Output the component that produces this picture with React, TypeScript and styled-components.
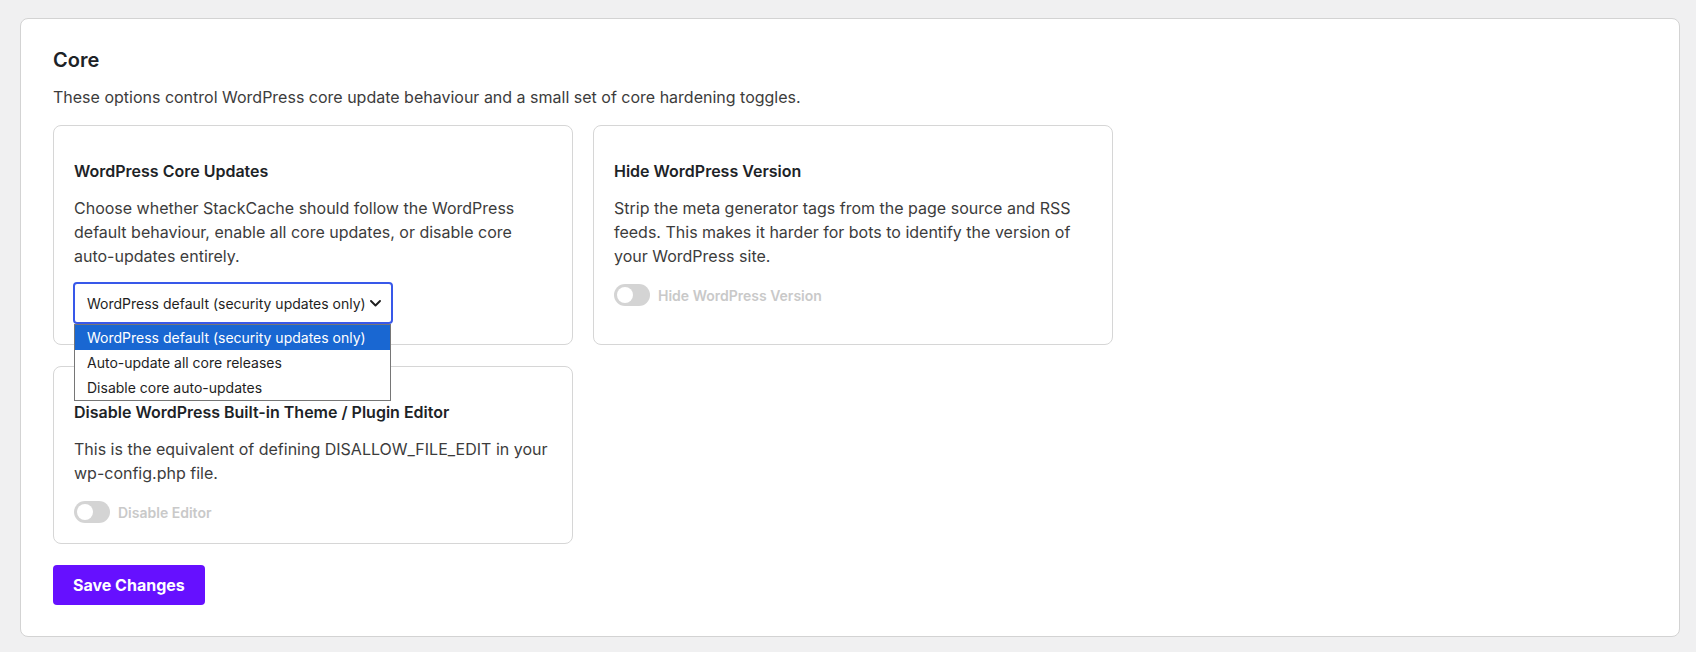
import React from "react";
import styled, { createGlobalStyle } from "styled-components";

const GlobalStyle = createGlobalStyle`
  html, body {
    margin: 0;
    padding: 0;
    background: #f0f0f1;
    font-family: Inter, "Noto Sans", "Liberation Sans", sans-serif;
    color: #1d2327;
  }
  * {
    box-sizing: border-box;
  }
`;

const Page = styled.div`
  padding: 18px 16px 15px 20px;
`;

const Panel = styled.section`
  background: #fff;
  border: 1px solid #d3d3d3;
  border-radius: 8px;
  padding: 28px 32px 31px;
`;

const Heading = styled.h2`
  margin: 0 0 12px;
  font-size: 20px;
  line-height: 26px;
  font-weight: 600;
  color: #1d2327;
`;

const Lead = styled.p`
  margin: 0 0 16px;
  font-size: 16px;
  line-height: 24px;
  color: #3c3c3c;
`;

const Grid = styled.div`
  display: grid;
  grid-template-columns: repeat(2, 520px);
  gap: 21px 20px;
  align-items: stretch;
`;

const Card = styled.div`
  background: #fff;
  border: 1px solid #d6d6d6;
  border-radius: 8px;
  padding: 32px 20px 20px;
`;

const CardTitle = styled.h3`
  margin: 0 0 12px;
  font-size: 16px;
  line-height: 26px;
  font-weight: 600;
  color: #1d2327;
`;

const CardText = styled.p`
  margin: 0;
  font-size: 16px;
  line-height: 24px;
  color: #3c3c3c;
`;

const SelectWrap = styled.div`
  position: relative;
  display: inline-block;
  margin-top: 14px;
  margin-left: -1px;
`;

const SelectBox = styled.div`
  display: inline-flex;
  align-items: center;
  gap: 4px;
  height: 42px;
  padding: 0 10px 0 12px;
  border: 2px solid #3858e9;
  border-radius: 4px;
  background: #fff;
  font-size: 14px;
  color: #1e1e1e;
  white-space: nowrap;

  svg {
    display: block;
    flex: none;
  }
`;

const OptionList = styled.ul`
  position: absolute;
  z-index: 10;
  top: 100%;
  left: 1px;
  right: 2px;
  margin: 0;
  padding: 0;
  list-style: none;
  background: #fff;
  border: 1px solid #767676;
`;

const Option = styled.li<{ $active?: boolean }>`
  height: 25px;
  display: flex;
  align-items: center;
  padding: 0 12px;
  font-size: 14px;
  white-space: nowrap;
  color: ${(p) => (p.$active ? "#fff" : "#1e1e1e")};
  background: ${(p) => (p.$active ? "#1967d2" : "transparent")};
`;

const ToggleRow = styled.label`
  display: flex;
  align-items: center;
  gap: 8px;
  margin-top: 16px;
  height: 22px;
`;

const Switch = styled.span<{ $on?: boolean }>`
  position: relative;
  width: 36px;
  height: 22px;
  border-radius: 11px;
  background: ${(p) => (p.$on ? "#6610ff" : "#d4d4d4")};
  flex: none;

  &::after {
    content: "";
    position: absolute;
    top: 3px;
    left: ${(p) => (p.$on ? "17px" : "3px")};
    width: 16px;
    height: 16px;
    border-radius: 50%;
    background: #fff;
  }
`;

const ToggleLabel = styled.span`
  font-size: 14px;
  font-weight: 600;
  color: #c9c9c9;
`;

const SaveButton = styled.button`
  margin-top: 21px;
  height: 40px;
  padding: 0 20px;
  border: 0;
  border-radius: 4px;
  background: #6610ff;
  color: #fff;
  font-family: inherit;
  font-size: 16px;
  font-weight: 700;
  cursor: pointer;
`;

const Chevron = () => (
  <svg width="11" height="7" viewBox="0 0 11 7" fill="none">
    <path d="M1 1l4.5 4.5L10 1" stroke="#1e1e1e" strokeWidth="1.9" strokeLinecap="round" strokeLinejoin="round" />
  </svg>
);

const updateModes = [
  "WordPress default (security updates only)",
  "Auto-update all core releases",
  "Disable core auto-updates",
];

const Toggle: React.FC<{ label: string }> = ({ label }) => (
  <ToggleRow>
    <Switch />
    <ToggleLabel>{label}</ToggleLabel>
  </ToggleRow>
);

const App: React.FC = () => {
  const selected = 0;

  return (
    <Page>
      <GlobalStyle />
      <Panel>
        <Heading>Core</Heading>
        <Lead>
          These options control WordPress core update behaviour and a small set of core hardening toggles.
        </Lead>

        <Grid>
          <Card>
            <CardTitle>WordPress Core Updates</CardTitle>
            <CardText>
              Choose whether StackCache should follow the WordPress default behaviour, enable all core updates, or
              disable core auto-updates entirely.
            </CardText>
            <SelectWrap>
              <SelectBox>
                {updateModes[selected]}
                <Chevron />
              </SelectBox>
              <OptionList>
                {updateModes.map((mode, i) => (
                  <Option key={mode} $active={i === selected}>
                    {mode}
                  </Option>
                ))}
              </OptionList>
            </SelectWrap>
          </Card>

          <Card>
            <CardTitle>Hide WordPress Version</CardTitle>
            <CardText>
              Strip the meta generator tags from the page source and RSS feeds. This makes it harder for bots to
              identify the version of your WordPress site.
            </CardText>
            <Toggle label="Hide WordPress Version" />
          </Card>

          <Card>
            <CardTitle>Disable WordPress Built-in Theme / Plugin Editor</CardTitle>
            <CardText>This is the equivalent of defining DISALLOW_FILE_EDIT in your wp-config.php file.</CardText>
            <Toggle label="Disable Editor" />
          </Card>
        </Grid>

        <SaveButton type="button">Save Changes</SaveButton>
      </Panel>
    </Page>
  );
};

export default App;
